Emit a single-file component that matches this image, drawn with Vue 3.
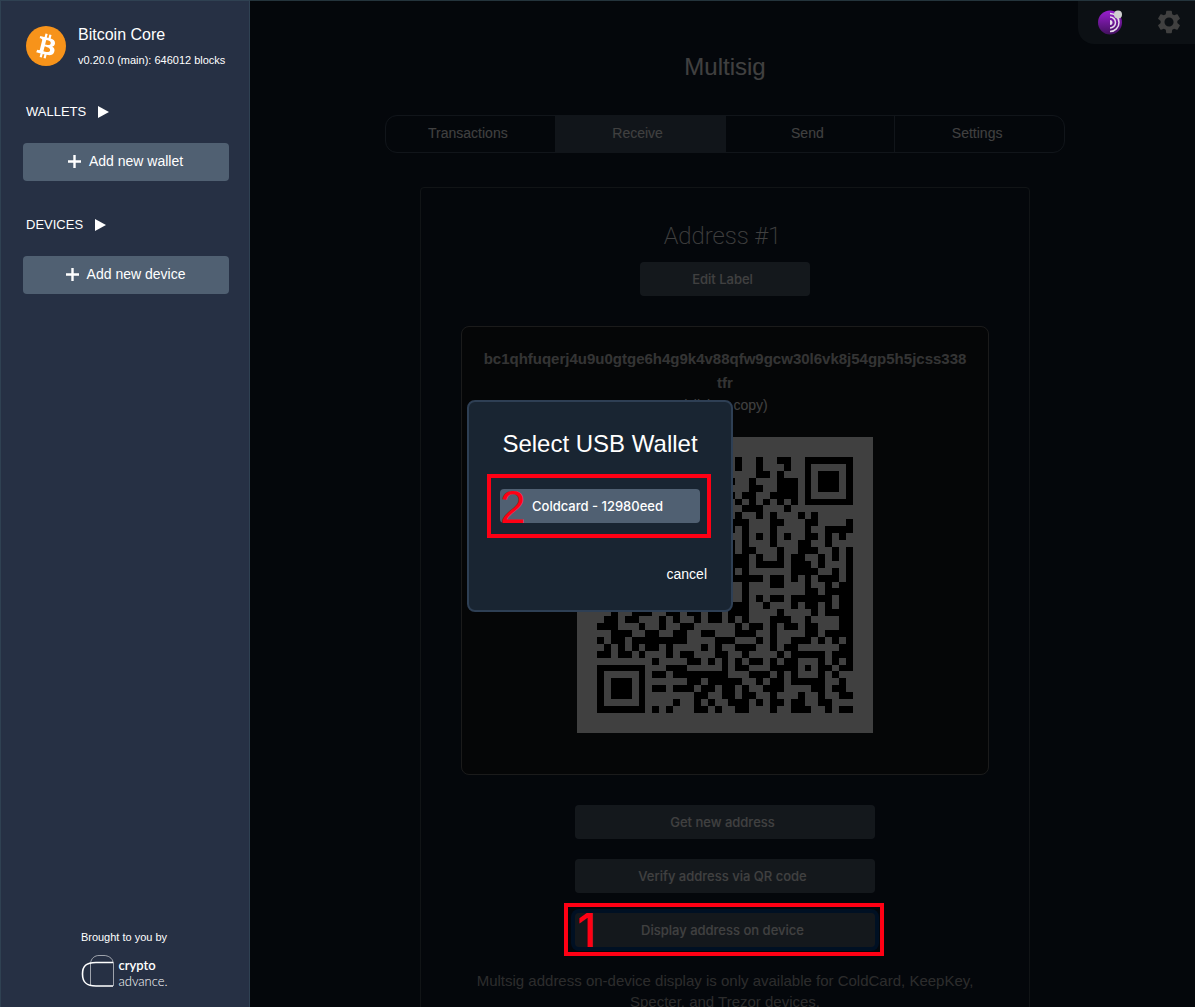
<script setup>
import { ref } from 'vue'

const tabs = ['Transactions', 'Receive', 'Send', 'Settings']
const activeTab = ref('Receive')

// One string per QR row, '#' is a dark module. Short rows are aligned right.
const qrSize = 37
const qrRows = [
  '.#..#..##..#######',
  '.#..#...#..#.....#',
  '....##.#...#.###.#',
  '#..#...###.#.###.#',
  '...##..###.#.###.#',
  '#.##..####.#.....#',
  '.#.#.#.#.#.#######',
  '..###...#.........',
  '.#..#.#...#.#.....',
  '###...##...##....#',
  '#.#...#....#..####',
  '..#.#.#.#..##.#.#.',
  '#.#...#...##..#...',
  '#.##...#..###..#.#',
  '###.#..#.##..#.#.#',
  '###.####.###.#...#',
  '#.#......####..#.#',
  '#####.##.#.#.###.#',
  '..#...##...#..#.##',
  '..#........##.####',
  '..#.#.##.######.##',
  '###..#...#.##.#.##',
  '..#..###..##.##.##.###....#....#.####',
  '.##.##...#.#..#.##.#.#...###..#....##',
  '###...#..#..##......#.##.#.##.##...##',
  '..###..##..##..##...###..#....##.####',
  '#.##.########....###...#.#..###.#.#.#',
  '.#.#.#.##.#....#.#..###..#.##......##',
  '##.##.#...#.##...##..#....#.#####.###',
  '........#....##.#.#.#.##.#.##...#.#.#',
  '#######...###.....#.##...####.#.##.##',
  '#.....#.##.########...###.#.#...#.#..',
  '#.###.#......##.#####..#.##.#####..#.',
  '#.###.#.##.###.##.##.#..###....##.##.',
  '#.###.#.......##..##.##..#...#..#..##',
  '#.....#....#..#.#..###.#.##.##..##...',
  '#######.#.#...##.#..##...#..###..#.##'
]
const qrPath = qrRows
  .map((row, y) =>
    [...row.padStart(qrSize, '.')]
      .map((cell, x) => (cell === '#' ? `M${x} ${y}h1v1h-1z` : ''))
      .join('')
  )
  .join('')
</script>

<template>
  <div class="shell">
    <aside class="sidebar">
      <a class="node" href="#">
        <svg class="node-icon" viewBox="0 0 32 32" aria-hidden="true">
          <circle cx="16" cy="16" r="16" fill="#f7931a" />
          <path fill="#fff" d="M23.189 14.02c.314-2.096-1.283-3.223-3.465-3.975l.708-2.84-1.728-.43-.69 2.765c-.454-.114-.92-.22-1.385-.326l.695-2.783L15.596 6l-.708 2.839c-.376-.086-.746-.17-1.104-.26l.002-.009-2.384-.595-.46 1.846s1.283.294 1.256.312c.7.175.826.638.805 1.006l-.806 3.235c.048.012.11.03.18.057l-.183-.045-1.13 4.532c-.086.212-.303.531-.793.41.018.025-1.256-.313-1.256-.313l-.858 1.978 2.25.561c.418.105.828.215 1.231.318l-.715 2.872 1.727.43.708-2.84c.472.127.93.245 1.378.357l-.706 2.828 1.728.43.715-2.866c2.948.558 5.164.333 6.097-2.333.752-2.146-.037-3.385-1.588-4.192 1.13-.26 1.98-1.003 2.207-2.538zm-3.95 5.538c-.533 2.147-4.148.986-5.32.695l.95-3.805c1.172.293 4.929.872 4.37 3.11zm.535-5.569c-.487 1.953-3.495.96-4.47.717l.86-3.45c.975.243 4.118.696 3.61 2.733z" />
        </svg>
        <span class="node-text">
          <span class="node-name">Bitcoin Core</span>
          <span class="node-info">v0.20.0 (main): 646012 blocks</span>
        </span>
      </a>

      <section v-for="group in [['WALLETS', 'Add new wallet'], ['DEVICES', 'Add new device']]" :key="group[0]" class="group">
        <h2 class="group-title">
          {{ group[0] }}
          <svg width="11" height="12" viewBox="0 0 11 12" aria-hidden="true"><path d="M0 0L11 6L0 12z" fill="#fff" /></svg>
        </h2>
        <button class="add" type="button">
          <svg width="14" height="14" viewBox="0 0 14 14" aria-hidden="true"><path d="M7.500 1V14M1 7.500H14" stroke="#fff" stroke-width="2.400" /></svg>
          {{ group[1] }}
        </button>
      </section>

      <footer class="credit">
        <span>Brought to you by</span>
        <a class="brand" href="#">
          <svg width="34" height="34" viewBox="0 0 34 34" fill="none" stroke="#fff" aria-hidden="true">
            <path d="M33 8.500H16C6 8.500 2.500 12 2.500 20S6 32 16 32H33" stroke-width="1.600" />
            <path d="M33.500 8V32M10.500 31.500V9.500C11 4 15 1.500 19 1.500H24C28 1.500 32.500 4 33 8" stroke-width="0.800" opacity="0.700" />
          </svg>
          <span class="brand-text"><b>crypto</b><span>advance.</span></span>
        </a>
      </footer>
    </aside>

    <main class="main">
      <h1 class="title">Multisig</h1>
      <nav class="tabs">
        <a v-for="tab in tabs" :key="tab" href="#" :class="['tab', { active: tab === activeTab }]" @click.prevent="activeTab = tab">{{ tab }}</a>
      </nav>

      <section class="card">
        <h2 class="label">Address #1</h2>
        <button class="btn edit" type="button">Edit Label</button>
        <div class="address-box">
          <p class="address">bc1qhfuqerj4u9u0gtge6h4g9k4v88qfw9gcw30l6vk8j54gp5h5jcss338tfr</p>
          <p class="hint">(click to copy)</p>
          <svg class="qr" viewBox="0 0 37 37" shape-rendering="crispEdges" role="img" aria-label="QR code"><path :d="qrPath" /></svg>
        </div>
        <button class="btn" type="button">Get new address</button>
        <button class="btn" type="button">Verify address via QR code</button>
        <button class="btn focused" type="button">Display address on device</button>
        <p class="note">Multsig address on-device display is only available for ColdCard, KeepKey, Specter, and Trezor devices.</p>
      </section>
      <div class="dim"></div>
      <div class="marks">
        <div class="mark mark-one">1</div>
      </div>
    </main>

    <div class="corner">
      <svg width="26" height="26" viewBox="0 0 26 26" aria-label="Tor" role="img">
        <defs>
          <linearGradient id="tor" x1="0" y1="0" x2="0" y2="1">
            <stop offset="0" stop-color="#9a1fd0" />
            <stop offset="1" stop-color="#42105e" />
          </linearGradient>
        </defs>
        <circle cx="12" cy="13.500" r="12" fill="url(#tor)" />
        <g fill="none" stroke="#e6dcec" stroke-width="1.500">
          <path d="M12 4.500a9 9 0 0 1 0 18" />
          <path d="M12 8a5.500 5.500 0 0 1 0 11" />
        </g>
        <path d="M12 11a2.500 2.500 0 0 1 0 5z" fill="#e6dcec" />
        <circle cx="20" cy="5.500" r="4" fill="#cfcfcf" />
      </svg>
      <svg width="28" height="28" viewBox="0 0 24 24" aria-label="Settings" role="img">
        <path fill="#404040" d="M19.140 12.940c.04-.3.060-.61.060-.94 0-.32-.02-.64-.07-.94l2.030-1.580c.18-.14.230-.41.120-.61l-1.920-3.320c-.12-.22-.37-.29-.59-.22l-2.390.96c-.5-.38-1.030-.7-1.620-.94l-.36-2.540c-.04-.24-.24-.41-.48-.41h-3.840c-.24 0-.43.170-.47.410l-.36 2.540c-.59.240-1.130.570-1.620.940l-2.390-.96c-.22-.08-.47 0-.59.220L2.740 8.870c-.12.210-.08.470.120.610l2.030 1.580c-.05.300-.09.630-.09.940s.02.640.070.940l-2.030 1.580c-.18.140-.23.410-.12.610l1.920 3.320c.12.220.37.290.59.220l2.390-.96c.5.380 1.030.700 1.620.940l.36 2.540c.05.240.24.410.48.410h3.840c.24 0 .44-.17.470-.41l.36-2.540c.59-.24 1.130-.56 1.620-.94l2.390.96c.22.080.47 0 .59-.22l1.920-3.320c.12-.22.070-.47-.12-.61l-2.010-1.580zM12 15.900c-2.150 0-3.900-1.750-3.900-3.900s1.750-3.900 3.900-3.900 3.900 1.750 3.900 3.900-1.750 3.900-3.900 3.900z" />
      </svg>
    </div>

    <div class="overlay">
      <div class="dialog" role="dialog" aria-labelledby="dialog-title">
        <h2 id="dialog-title" class="dialog-title">Select USB Wallet</h2>
        <div class="choice">
          <button class="btn" type="button">Coldcard - 12980eed</button>
          <div class="mark mark-two">2</div>
        </div>
        <button class="cancel" type="button">cancel</button>
      </div>
    </div>
  </div>
</template>

<style>
body {
  margin: 0;
  background: #101c2c;
}
</style>

<style scoped>
* {
  box-sizing: border-box;
}
.shell {
  display: flex;
  height: 100vh;
  overflow: hidden;
  color: #fff;
  background: #101c2c;
  font-family: "Liberation Sans", Arial, sans-serif;
  font-size: 14px;
}
h1, h2, p {
  margin: 0;
  font-weight: 400;
}
a {
  color: inherit;
  text-decoration: none;
}
button {
  border: 0;
  color: #fff;
  font: inherit;
  cursor: pointer;
}
.sidebar {
  display: flex;
  flex: none;
  flex-direction: column;
  width: 250px;
  padding: 24px 20px 18px 22px;
  border: 1px solid #2f4152;
  border-bottom: 0;
  background: #263044;
}
.node {
  display: flex;
  gap: 12px;
  padding-left: 3px;
  margin-bottom: 34px;
}
.node-icon {
  flex: none;
  width: 40px;
  height: 40px;
  margin-top: 1px;
}
.node-text {
  display: flex;
  flex-direction: column;
  gap: 7px;
  white-space: nowrap;
}
.node-name {
  font-size: 16px;
  line-height: 20px;
}
.node-info {
  font-size: 11px;
  line-height: 16px;
}
.group {
  margin-bottom: 34px;
}
.group-title {
  display: flex;
  align-items: center;
  gap: 12px;
  padding-left: 3px;
  margin-bottom: 21px;
  font-size: 13px;
  line-height: 20px;
}
.add {
  display: flex;
  align-items: center;
  justify-content: center;
  gap: 8px;
  width: 206px;
  height: 38px;
  padding: 0 8px 2px 6px;
  border-radius: 4px;
  background: #506072;
}
.credit {
  display: flex;
  flex-direction: column;
  align-items: center;
  gap: 8px;
  padding-right: 4px;
  margin-top: auto;
  font-size: 11px;
  line-height: 16px;
}
.brand {
  display: flex;
  gap: 4px;
  align-items: center;
}
.brand-text {
  display: flex;
  flex-direction: column;
  padding-top: 4px;
  font-family: Lato, sans-serif;
  font-size: 13px;
}
.brand-text b {
  font-weight: 600;
}
.brand-text span {
  font-weight: 300;
}
.main {
  position: relative;
  display: flex;
  flex: 1;
  flex-direction: column;
  align-items: center;
  min-width: 0;
  padding: 51px 0 0 5px;
  border-top: 1px solid #24343c;
}
.title {
  margin-bottom: 33px;
  font-size: 24px;
  line-height: 30px;
}
.tabs {
  display: flex;
  flex: none;
  width: 680px;
  height: 38px;
  margin-bottom: 34px;
  overflow: hidden;
  border: 1px solid #445468;
  border-radius: 12px;
}
.tab {
  flex: 1;
  padding-right: 5px;
  border-right: 1px solid #445468;
  line-height: 34px;
  text-align: center;
}
.tab:last-child {
  border-right: 0;
}
.tab.active {
  background: #445468;
}
.card {
  display: flex;
  flex: none;
  flex-direction: column;
  align-items: center;
  width: 610px;
  padding: 32px 40px 0;
  border: 1px solid #445058;
  border-radius: 4px;
}
.label {
  padding-right: 5px;
  margin-bottom: 10px;
  font-family: Roboto, sans-serif;
  font-size: 24px;
  font-weight: 200;
  line-height: 32px;
}
.btn {
  flex: none;
  width: 300px;
  height: 34px;
  padding: 0 5px 0 0;
  margin-bottom: 20px;
  border-radius: 4px;
  background: #506072;
  font-family: Inter, sans-serif;
  font-size: 13px;
  font-weight: 500;
}
.btn.edit {
  width: 170px;
  margin-bottom: 30px;
}
.btn.focused {
  box-shadow: 0 0 0 4px #00408c;
}
.address-box {
  display: flex;
  flex-direction: column;
  align-items: center;
  width: 100%;
  padding: 20px 20px 41px;
  margin-bottom: 30px;
  border: 1px solid #6c6c6c;
  border-radius: 8px;
  background: #14181c;
  text-align: center;
}
.address {
  font-size: 15px;
  font-weight: 700;
  line-height: 24px;
  color: #d0d0d0;
  word-break: break-all;
}
.hint {
  margin-bottom: 21px;
  font-size: 14px;
  line-height: 21px;
}
.qr {
  width: 296px;
  height: 296px;
  padding: 20px;
  background: #fff;
}
.note {
  margin-top: 3px;
  font-size: 15px;
  line-height: 21px;
  color: #b0b0b0;
  text-align: center;
}
.dim {
  position: absolute;
  inset: 0;
  background: rgba(0, 0, 0, 0.75);
}
.marks {
  position: absolute;
  inset: 902px 2px auto 5px;
  display: flex;
  justify-content: center;
}
.mark {
  border: 4px solid #ff0014;
  color: #ff0014;
  font-size: 46px;
  line-height: 46px;
  pointer-events: none;
}
.mark-one {
  width: 320px;
  height: 53px;
  padding-left: 9px;
  font-family: Inter, sans-serif;
  font-weight: 500;
}
.corner {
  position: absolute;
  top: 1px;
  right: 0;
  display: flex;
  align-items: center;
  gap: 31px;
  width: 117px;
  height: 43px;
  padding: 0 0 2px 20px;
  border-bottom-left-radius: 16px;
  background: #0c1014;
}
.corner svg {
  flex: none;
}
.overlay {
  position: fixed;
  inset: 0;
  display: flex;
  align-items: center;
  justify-content: center;
  padding: 4px 0 0 5px;
}
.dialog {
  display: flex;
  flex-direction: column;
  width: 266px;
  padding: 27px 24px 25px;
  border: 2px solid #2e3f54;
  border-radius: 8px;
  background: #192532;
}
.dialog-title {
  margin-bottom: 30px;
  font-size: 24px;
  line-height: 30px;
  text-align: center;
}
.choice {
  position: relative;
  align-self: center;
  width: 200px;
}
.choice .btn {
  width: 100%;
  margin-bottom: 40px;
}
.mark-two {
  position: absolute;
  inset: -15px -11px auto -13px;
  height: 64px;
  padding: 6px 0 0 9px;
}
.cancel {
  align-self: flex-end;
  padding: 0;
  background: none;
  line-height: 22px;
}
</style>
